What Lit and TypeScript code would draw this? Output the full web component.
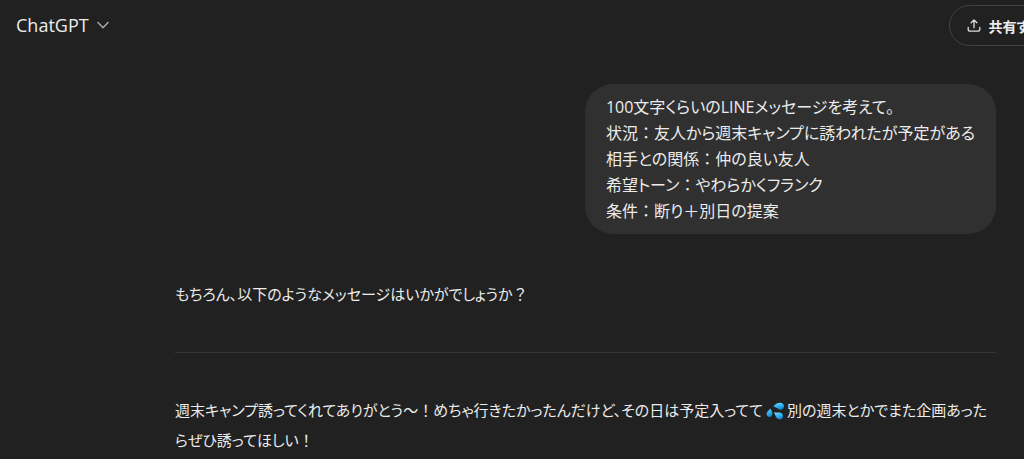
import { LitElement, html, css, svg } from "lit";
import { customElement, property } from "lit/decorators.js";

const fonts = css`"Open Sans", "Noto Sans CJK JP", sans-serif`;

// Kana are set proportionally, while these signs keep their full width.
const wideSigns = /([：＋？！])/;
const typeset = (text: string) =>
  text
    .split(wideSigns)
    .map((part) => (wideSigns.test(part) ? html`<span class="wide">${part}</span>` : part));

const typesetStyles = css`
  .wide {
    font-feature-settings: normal;
  }
`;

@customElement("chat-header")
class ChatHeader extends LitElement {
  static styles = css`
    :host {
      display: block;
      overflow: hidden;
    }
    .bar {
      display: flex;
      justify-content: space-between;
      align-items: flex-start;
      padding: 5px 0 5px 8px;
    }
    button {
      font: inherit;
      color: inherit;
      background: none;
      border: 0;
      cursor: pointer;
    }
    .model {
      display: flex;
      align-items: center;
      gap: 8px;
      padding: 0 8px;
      font-size: 18px;
      line-height: 40px;
    }
    .share {
      display: flex;
      flex: none;
      align-items: center;
      gap: 8px;
      height: 41px;
      padding: 0 17px;
      margin-right: -36px;
      border: 1px solid #424242;
      border-radius: 21px;
      font-size: 14px;
      font-weight: 700;
      white-space: nowrap;
    }
    svg {
      display: block;
      flex: none;
      fill: none;
      stroke-linecap: round;
      stroke-linejoin: round;
    }
    .chevron {
      stroke: #a8a8a8;
      stroke-width: 1.5;
    }
    .upload {
      stroke: #dcdcdc;
      stroke-width: 1.3;
    }
  `;
  render() {
    return html`
      <header class="bar">
        <button class="model" type="button">
          ChatGPT
          <svg class="chevron" width="12" height="12" viewBox="0 0 12 12" aria-hidden="true">
            <path d="M1 3.500 L6 8.700 L11 3.500" />
          </svg>
        </button>
        <button class="share" type="button">
          <svg class="upload" width="14" height="14" viewBox="0 0 14 14" aria-hidden="true">
            <path d="M7 8.700V1.200M4.100 3.800L7 1L9.900 3.800M1.200 8.300V10.200a2 2 0 0 0 2 2H10.800a2 2 0 0 0 2-2V8.300" />
          </svg>
          共有する
        </button>
      </header>
    `;
  }
}

@customElement("user-message")
class UserMessage extends LitElement {
  @property({ attribute: false }) lines: string[] = [];
  static styles = [
    typesetStyles,
    css`
      :host {
        display: flex;
        justify-content: flex-end;
        font-size: 16px;
      }
      .bubble {
        padding: 10px 21px;
        border-radius: 28px;
        background: #303030;
        line-height: 26px;
      }
      p {
        margin: 0;
      }
    `,
  ];
  render() {
    return html`<div class="bubble">${this.lines.map((l) => html`<p>${typeset(l)}</p>`)}</div>`;
  }
}

const sweat = svg`
  <defs>
    <linearGradient id="drop" x1="0" y1="0" x2="0.4" y2="1">
      <stop offset="0" stop-color="#7fdcff" />
      <stop offset="0.55" stop-color="#35b5f3" />
      <stop offset="1" stop-color="#168bd0" />
    </linearGradient>
  </defs>
  <path d="M7 4.200C8.600 1.700 11.500.300 14 .700C16.400 1.100 17.500 3.300 16.700 5.300C15.900 7.300 13.600 7.900 11.800 6.700C10.400 5.700 9.200 4.700 7 4.200Z" />
  <path d="M3.900 6.200C5.400 8 6.300 10 6 11.800C5.700 13.600 4 14.500 2.400 13.900C.800 13.300.200 11.700.800 10.200C1.400 8.700 3 7.800 3.900 6.200Z" />
  <path d="M7.200 9.700C9.500 10.300 12 9.400 14 10.200C16 11 16.600 13.200 15.600 14.900C14.600 16.600 12.200 17 10.600 15.700C9 14.400 9 11.800 7.200 9.700Z" />
`;

@customElement("assistant-message")
class AssistantMessage extends LitElement {
  static styles = [
    typesetStyles,
    css`
      :host {
        display: block;
        font-size: 15px;
        line-height: 30px;
      }
      p {
        margin: 0;
      }
      hr {
        height: 1px;
        margin: 43px 0 42px;
        border: 0;
        background: #353535;
      }
      .emoji {
        width: 18px;
        height: 18px;
        margin: 0 3px;
        vertical-align: -4px;
        fill: url(#drop);
      }
    `,
  ];
  render() {
    return html`
      <p>${typeset("もちろん、以下のようなメッセージはいかがでしょうか？")}</p>
      <hr />
      <p>${typeset("週末キャンプ誘ってくれてありがとう〜！めちゃ行きたかったんだけど、その日は予定入ってて")}<svg class="emoji" viewBox="0 0 17 17" role="img" aria-label="💦">${sweat}</svg>${typeset("別の週末とかでまた企画あったらぜひ誘ってほしい！")}</p>
    `;
  }
}

@customElement("app-root")
class AppRoot extends LitElement {
  static styles = css`
    :host {
      display: block;
      min-height: 100vh;
      background: #212121;
      color: #ececec;
      font-family: ${fonts};
      font-feature-settings: "palt";
    }
    .thread {
      max-width: 821px;
      margin-left: auto;
      padding: 33px 28px 0;
    }
    .reply {
      margin-top: 45px;
    }
  `;
  render() {
    return html`
      <chat-header></chat-header>
      <main class="thread">
        <user-message
          .lines=${[
            "100文字くらいのLINEメッセージを考えて。",
            "状況：友人から週末キャンプに誘われたが予定がある",
            "相手との関係：仲の良い友人",
            "希望トーン：やわらかくフランク",
            "条件：断り＋別日の提案",
          ]}
        ></user-message>
        <assistant-message class="reply"></assistant-message>
      </main>
    `;
  }
}
